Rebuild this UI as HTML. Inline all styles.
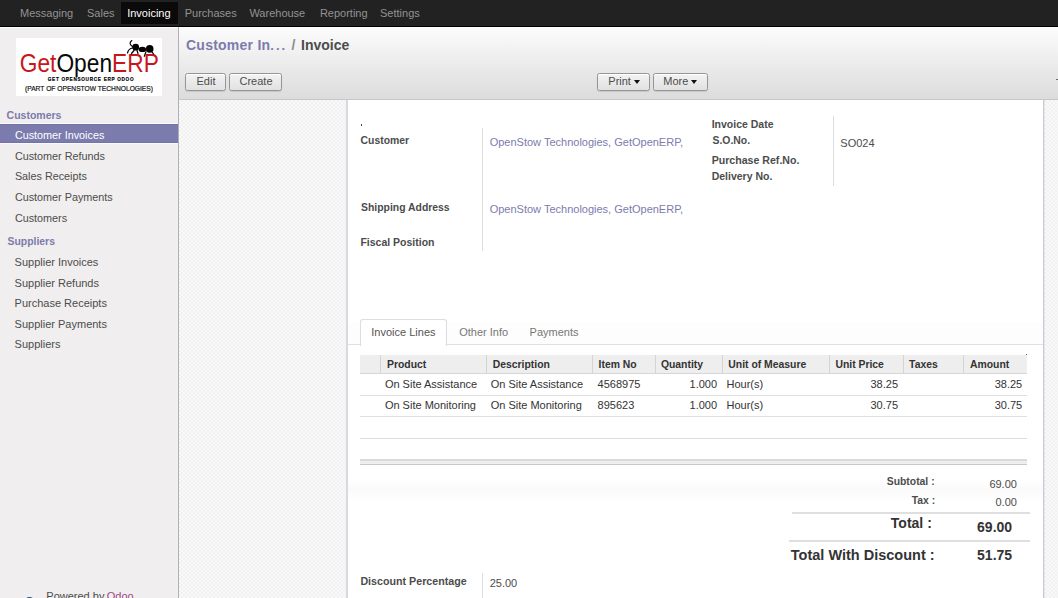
<!DOCTYPE html>
<html><head><meta charset="utf-8"><title>Invoice</title>
<style>
html,body{margin:0;padding:0}
body{width:1058px;height:598px;overflow:hidden;position:relative;background:#fff;font-family:"Liberation Sans",sans-serif}
.a{position:absolute}
.t{position:absolute;white-space:nowrap;line-height:20px;font-family:"Liberation Sans",sans-serif}
#topbar{left:0;top:0;width:1058px;height:26px;background:#222}
#topline{left:0;top:26px;width:1058px;height:1px;background:#000}
#active{left:121px;top:2px;width:57px;height:22px;background:#0a0a0a}
#sidebar{left:0;top:27px;width:178px;height:571px;background:#f0eeee;border-right:1px solid #afafb6;box-shadow:inset 0 1px 0 #fff}
#logo{left:16px;top:38px;width:146px;height:58px;background:#fff}
#selbar{left:0;top:124px;width:178px;height:17px;background:#7c7bad;border-top:1px solid #7574a8;border-bottom:1px solid #7574a8;box-shadow:0 -1px 0 #fbfafa,0 1px 0 #fbfafa}
#header{left:179px;top:27px;width:879px;height:72px;background:linear-gradient(#fcfcfc,#dcdcdc);border-bottom:1px solid #c8c8c8}
#formbg{left:179px;top:100px;width:879px;height:498px;background-color:#f4f4f4;
  background-image:repeating-conic-gradient(#f1f1f1 0 25%, #f9f9f9 0 50%);background-size:4px 4px}
#sheet{left:346px;top:100px;width:695px;height:520px;background:#fff;border-left:2px solid #d8d8e0;border-right:1px solid #cacad4;box-shadow:1px 0 0 #e6e6e6}
.btn{position:absolute;height:16px;border:1px solid #959595;border-radius:2.5px;background:linear-gradient(#f3f3f3,#e1e1e1);box-shadow:inset 0 1px 0 #fff,0 1px 1px rgba(0,0,0,0.10)}
.vsep{position:absolute;width:1px;background:#dcdcdc}
.hl{position:absolute;height:1px}
.caret{position:absolute;width:0;height:0;border-left:3.5px solid transparent;border-right:3.5px solid transparent;border-top:4px solid #111}

</style></head><body>
<div id="topbar" class="a"></div>
<div id="topline" class="a"></div>
<div id="active" class="a"></div>
<div id="sidebar" class="a"></div>
<div id="logo" class="a">
<svg width="146" height="58" viewBox="0 0 146 58">
  <text x="3.8" y="34.2" font-family="Liberation Sans" font-size="25" textLength="139" lengthAdjust="spacingAndGlyphs"><tspan fill="#c8161d">Get</tspan><tspan fill="#0a0a0a">Open</tspan><tspan fill="#c8161d">ERP</tspan></text>
  <g transform="translate(31.8 43.2) scale(0.78 1)"><text x="0" y="0" font-family="Liberation Sans" font-size="6" font-weight="700" fill="#000" stroke="#000" stroke-width="0.2" textLength="110" lengthAdjust="spacing">GET OPENSOURCE ERP ODOO</text></g>
  <text x="9" y="53.4" font-family="Liberation Sans" font-size="8" fill="#111" stroke="#111" stroke-width="0.2" textLength="128" lengthAdjust="spacingAndGlyphs">(PART OF OPENSTOW TECHNOLOGIES)</text>
  <g fill="#000">
    <circle cx="119.7" cy="9.2" r="3.4"/>
    <ellipse cx="126.4" cy="11.4" rx="3.8" ry="2.6"/>
    <circle cx="133.7" cy="10.9" r="3.8"/>
  </g>
  <g stroke="#000" stroke-width="1.2" fill="none" stroke-linecap="round">
    <path d="M116.5 8.5 Q112 5.5 115.8 2.6"/>
    <path d="M116.5 10 Q112.5 10.5 111.5 15"/>
    <path d="M118 12.5 L115.5 15.5"/><path d="M121 12.5 L122 15.5"/><path d="M130 13.8 L128.3 18.3"/><path d="M136 13.8 L137.5 16"/>
  </g>
</svg>
</div>
<div id="selbar" class="a"></div>
<div id="header" class="a"></div>
<div class="btn" style="left:185px;top:73px;width:39px"></div>
<div class="btn" style="left:229px;top:73px;width:51px"></div>
<div class="btn" style="left:597px;top:73px;width:51px"></div>
<div class="btn" style="left:653px;top:73px;width:53px"></div>
<div class="caret" style="left:633.5px;top:80px"></div>
<div class="caret" style="left:690.5px;top:80px"></div>
<div class="t" style="left:196.5px;top:71px;font-size:11px;color:#4c4c4c">Edit</div>
<div class="t" style="left:239.5px;top:71px;font-size:11px;color:#4c4c4c">Create</div>
<div class="t" style="left:608.3px;top:71px;font-size:11px;color:#4c4c4c">Print</div>
<div class="t" style="left:663.3px;top:71px;font-size:11px;color:#4c4c4c">More</div>
<div class="a" style="left:1056px;top:78.5px;width:2px;height:1.5px;background:#6a6a6a"></div>
<div id="formbg" class="a"></div>
<div id="sheet" class="a"></div>
<div class="a" style="left:361px;top:124px;width:1px;height:2px;background:#444"></div>
<div class="vsep" style="left:482px;top:128px;height:123px"></div>
<div class="vsep" style="left:833px;top:116px;height:70px"></div>
<!-- tabs -->
<div class="a" style="left:348px;top:323px;width:695px;height:21px;background:#fdfdfd;border-bottom:1px solid #e0e0e0"></div>
<div class="a" style="left:360px;top:319px;width:85px;height:26px;background:#fff;border:1px solid #dddddd;border-bottom:none;border-radius:3px 3px 0 0"></div>
<!-- table -->
<div class="a" style="left:360px;top:355px;width:667px;height:18px;background:#eeeeee;border-bottom:1px solid #d6d6d6"></div>
<div class="a" style="left:1026px;top:354px;width:1px;height:1px;background:#666"></div>
<div class="a" style="left:348px;top:478px;width:695px;height:24px;background:linear-gradient(rgba(0,0,0,0),rgba(0,0,0,0.018),rgba(0,0,0,0))"></div>
<div class="vsep" style="left:380px;top:355px;height:18px;background:#d4d4d4"></div>
<div class="vsep" style="left:486px;top:355px;height:18px;background:#d4d4d4"></div>
<div class="vsep" style="left:592px;top:355px;height:18px;background:#d4d4d4"></div>
<div class="vsep" style="left:655px;top:355px;height:18px;background:#d4d4d4"></div>
<div class="vsep" style="left:722px;top:355px;height:18px;background:#d4d4d4"></div>
<div class="vsep" style="left:829px;top:355px;height:18px;background:#d4d4d4"></div>
<div class="vsep" style="left:903px;top:355px;height:18px;background:#d4d4d4"></div>
<div class="vsep" style="left:963px;top:355px;height:18px;background:#d4d4d4"></div>
<div class="hl" style="left:360px;top:395px;width:667px;background:#e0e0e0"></div>
<div class="hl" style="left:360px;top:416px;width:667px;background:#e0e0e0"></div>
<div class="hl" style="left:360px;top:438px;width:667px;background:#dcdcdc"></div>
<!-- double line -->
<div class="a" style="left:360px;top:459px;width:667px;height:3px;background:#eeeeee;border-top:2px solid #d9d9d9;border-bottom:1px solid #c9c9c9"></div>
<div class="hl" style="left:792px;top:512px;width:238px;height:2px;background:#dfdfdf"></div>
<div class="hl" style="left:789px;top:540px;width:241px;height:2px;background:#dfdfdf"></div>
<div class="vsep" style="left:482px;top:573px;height:25px"></div>
<!-- footer odoo logo -->
<div class="a" style="left:24px;top:596.5px;width:11px;height:11px;border-radius:50%;background:#1d4b73"></div>

<div class='t' style='left:20.0px;top:3px;font-size:11px;font-weight:400;color:#939393;'>Messaging</div>
<div class='t' style='left:87.0px;top:3px;font-size:11px;font-weight:400;color:#939393;'>Sales</div>
<div class='t' style='left:184.7px;top:3px;font-size:11px;font-weight:400;color:#939393;'>Purchases</div>
<div class='t' style='left:249.4px;top:3px;font-size:11px;font-weight:400;color:#939393;'>Warehouse</div>
<div class='t' style='left:319.9px;top:3px;font-size:11px;font-weight:400;color:#939393;'>Reporting</div>
<div class='t' style='left:380.0px;top:3px;font-size:11px;font-weight:400;color:#939393;'>Settings</div>
<div class='t' style='left:127.2px;top:3px;font-size:11px;font-weight:400;color:#ffffff;'>Invoicing</div>
<div class='t' style='left:6.6px;top:105px;font-size:10.5px;font-weight:700;color:#7c7bad;'>Customers</div>
<div class='t' style='left:14.9px;top:125px;font-size:10.8px;font-weight:400;color:#ffffff;'>Customer Invoices</div>
<div class='t' style='left:14.9px;top:146px;font-size:10.8px;font-weight:400;color:#4c4c4c;'>Customer Refunds</div>
<div class='t' style='left:14.9px;top:166px;font-size:10.8px;font-weight:400;color:#4c4c4c;'>Sales Receipts</div>
<div class='t' style='left:14.9px;top:187px;font-size:10.8px;font-weight:400;color:#4c4c4c;'>Customer Payments</div>
<div class='t' style='left:14.9px;top:208px;font-size:10.8px;font-weight:400;color:#4c4c4c;'>Customers</div>
<div class='t' style='left:7.6px;top:232px;font-size:10.4px;font-weight:700;color:#7c7bad;'>Suppliers</div>
<div class='t' style='left:14.6px;top:252px;font-size:11px;font-weight:400;color:#4c4c4c;'>Supplier Invoices</div>
<div class='t' style='left:14.6px;top:273px;font-size:11px;font-weight:400;color:#4c4c4c;'>Supplier Refunds</div>
<div class='t' style='left:14.6px;top:293px;font-size:11px;font-weight:400;color:#4c4c4c;'>Purchase Receipts</div>
<div class='t' style='left:14.6px;top:314px;font-size:11px;font-weight:400;color:#4c4c4c;'>Supplier Payments</div>
<div class='t' style='left:14.6px;top:334px;font-size:11px;font-weight:400;color:#4c4c4c;'>Suppliers</div>
<div class='t' style='left:46.3px;top:586px;font-size:11px;font-weight:400;color:#4c4c4c;'>Powered by</div>
<div class='t' style='left:106.8px;top:586px;font-size:11px;font-weight:400;color:#a24689;'>Odoo</div>
<div class='t' style='left:186.0px;top:35px;font-size:14px;font-weight:700;color:#7c7bad;'><span style="letter-spacing:0.24px">Customer In</span><span style="letter-spacing:2px;font-size:13px">...</span></div>
<div class='t' style='left:291.4px;top:35px;font-size:14px;font-weight:700;color:#8c8c8c;'>/</div>
<div class='t' style='left:301.1px;top:35px;font-size:14px;font-weight:700;color:#4c4c4c;'>Invoice</div>
<div class='t' style='left:360.6px;top:131px;font-size:10.4px;font-weight:700;color:#4c4c4c;'>Customer</div>
<div class='t' style='left:489.7px;top:132px;font-size:11px;font-weight:400;color:#7c7bad;'>OpenStow Technologies, GetOpenERP,</div>
<div class='t' style='left:361.1px;top:198px;font-size:10.4px;font-weight:700;color:#4c4c4c;'>Shipping Address</div>
<div class='t' style='left:489.7px;top:199px;font-size:11px;font-weight:400;color:#7c7bad;'>OpenStow Technologies, GetOpenERP,</div>
<div class='t' style='left:360.4px;top:232px;font-size:10.5px;font-weight:700;color:#4c4c4c;'>Fiscal Position</div>
<div class='t' style='left:711.7px;top:114px;font-size:10.5px;font-weight:700;color:#4c4c4c;'>Invoice Date</div>
<div class='t' style='left:712.5px;top:131px;font-size:10.4px;font-weight:700;color:#4c4c4c;'>S.O.No.</div>
<div class='t' style='left:711.7px;top:150px;font-size:10.6px;font-weight:700;color:#4c4c4c;'>Purchase Ref.No.</div>
<div class='t' style='left:711.7px;top:166px;font-size:10.5px;font-weight:700;color:#4c4c4c;'>Delivery No.</div>
<div class='t' style='left:840.3px;top:133px;font-size:11px;font-weight:400;color:#4c4c4c;'>SO024</div>
<div class='t' style='left:371.3px;top:322px;font-size:11px;font-weight:400;color:#555555;'>Invoice Lines</div>
<div class='t' style='left:459.2px;top:322px;font-size:11px;font-weight:400;color:#777777;'>Other Info</div>
<div class='t' style='left:529.6px;top:322px;font-size:11px;font-weight:400;color:#777777;'>Payments</div>
<div class='t' style='left:387.0px;top:355px;font-size:10.4px;font-weight:700;color:#333333;'>Product</div>
<div class='t' style='left:492.7px;top:355px;font-size:10.4px;font-weight:700;color:#333333;'>Description</div>
<div class='t' style='left:598.6px;top:355px;font-size:10.4px;font-weight:700;color:#333333;'>Item No</div>
<div class='t' style='left:660.9px;top:355px;font-size:10.4px;font-weight:700;color:#333333;'>Quantity</div>
<div class='t' style='left:728.3px;top:355px;font-size:10.4px;font-weight:700;color:#333333;'>Unit of Measure</div>
<div class='t' style='left:835.4px;top:355px;font-size:10.4px;font-weight:700;color:#333333;'>Unit Price</div>
<div class='t' style='left:909.1px;top:355px;font-size:10.4px;font-weight:700;color:#333333;'>Taxes</div>
<div class='t' style='left:970.0px;top:355px;font-size:10.4px;font-weight:700;color:#333333;'>Amount</div>
<div class='t' style='left:384.9px;top:374px;font-size:11px;font-weight:400;color:#333333;'>On Site Assistance</div>
<div class='t' style='left:490.7px;top:374px;font-size:11px;font-weight:400;color:#333333;'>On Site Assistance</div>
<div class='t' style='left:597.6px;top:374px;font-size:11px;font-weight:400;color:#333333;'>4568975</div>
<div class='t' style='right:340.9px;top:374px;font-size:11px;font-weight:400;color:#333333;'>1.000</div>
<div class='t' style='left:726.5px;top:374px;font-size:11px;font-weight:400;color:#333333;'>Hour(s)</div>
<div class='t' style='right:160.0px;top:374px;font-size:11px;font-weight:400;color:#333333;'>38.25</div>
<div class='t' style='right:35.8px;top:374px;font-size:11px;font-weight:400;color:#333333;'>38.25</div>
<div class='t' style='left:384.9px;top:395px;font-size:11px;font-weight:400;color:#333333;'>On Site Monitoring</div>
<div class='t' style='left:490.7px;top:395px;font-size:11px;font-weight:400;color:#333333;'>On Site Monitoring</div>
<div class='t' style='left:597.6px;top:395px;font-size:11px;font-weight:400;color:#333333;'>895623</div>
<div class='t' style='right:340.9px;top:395px;font-size:11px;font-weight:400;color:#333333;'>1.000</div>
<div class='t' style='left:726.5px;top:395px;font-size:11px;font-weight:400;color:#333333;'>Hour(s)</div>
<div class='t' style='right:160.0px;top:395px;font-size:11px;font-weight:400;color:#333333;'>30.75</div>
<div class='t' style='right:35.8px;top:395px;font-size:11px;font-weight:400;color:#333333;'>30.75</div>
<div class='t' style='right:123.4px;top:472px;font-size:10.4px;font-weight:700;color:#4c4c4c;'>Subtotal :</div>
<div class='t' style='right:41.1px;top:474px;font-size:11px;font-weight:400;color:#4c4c4c;'>69.00</div>
<div class='t' style='right:122.8px;top:491px;font-size:10.4px;font-weight:700;color:#4c4c4c;'>Tax :</div>
<div class='t' style='right:41.1px;top:492px;font-size:11px;font-weight:400;color:#4c4c4c;'>0.00</div>
<div class='t' style='right:126.2px;top:513px;font-size:14px;font-weight:700;color:#333333;'>Total :</div>
<div class='t' style='right:45.9px;top:517px;font-size:14px;font-weight:700;color:#333333;'>69.00</div>
<div class='t' style='right:123.4px;top:545px;font-size:14.5px;font-weight:700;color:#333333;'>Total With Discount :</div>
<div class='t' style='right:45.9px;top:545px;font-size:14px;font-weight:700;color:#333333;'>51.75</div>
<div class='t' style='left:360.4px;top:571px;font-size:10.7px;font-weight:700;color:#4c4c4c;'>Discount Percentage</div>
<div class='t' style='left:489.7px;top:573px;font-size:11px;font-weight:400;color:#4c4c4c;'>25.00</div>
</body></html>
